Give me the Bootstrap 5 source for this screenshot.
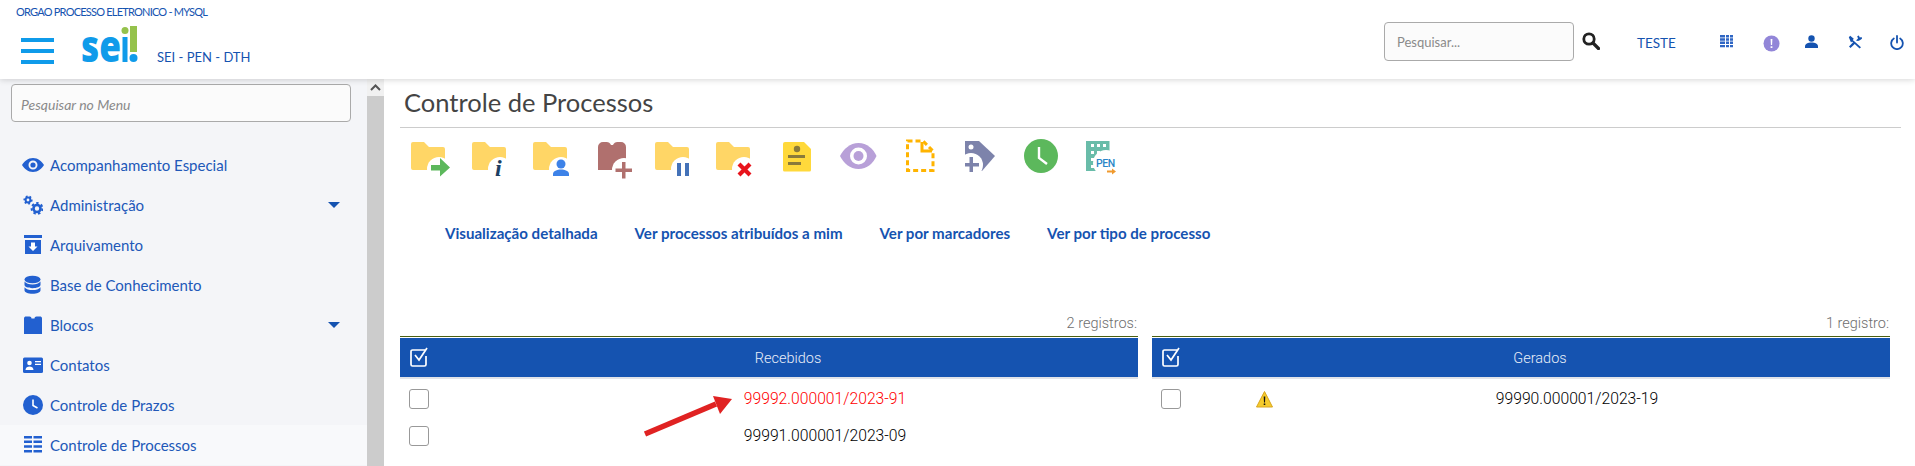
<!DOCTYPE html>
<html lang="pt-BR">
<head>
    <meta charset="UTF-8">
    <title>SEI - Controle de Processos</title>
    <link href="https://cdn.jsdelivr.net/npm/bootstrap@5.3.0/dist/css/bootstrap.min.css" rel="stylesheet">
    <style>
        html, body { height: 466px; overflow: hidden; }
        body { font-family: "Lato", "Liberation Sans", sans-serif; background: #fff; color: #333; }

        .sei-top { height: 79px; position: relative; z-index: 5; box-shadow: 0 1px 6px rgba(0,0,0,.16); background: #fff; }
        .sei-brand { padding: 5px 0 0 16px; width: 600px; }
        .sei-orgao { font-size: 11px; line-height: 13px; color: #1553b0; letter-spacing: -.78px; }
        .sei-hamb { width: 33px; margin: 20px 27px 0 5px; }
        .sei-hamb span { display: block; height: 4px; background: #0f9bea; margin-bottom: 7px; }
        .sei-logo { display: block; margin-top: 8px; overflow: visible; }
        .sei-orgname { font-size: 13px; color: #1553b0; margin-top: 30px; line-height: 18px; }
        .sei-tools { padding: 22px 3px 0 0; }
        .sei-search { width: 190px; height: 39px; font-size: 13px; background: #fbfbfb; border: 1px solid #aaa; border-radius: 4px; padding: 0 12px; }
        .sei-search::placeholder, .side-search::placeholder { color: #8a8a8a; }
        .sei-mag { margin: 10px 37px 0 8px; }
        .sei-user { font-size: 13.5px; color: #1553b0; width: 83px; margin-top: 12px; line-height: 18px; }
        .sei-topicon { width: 42.5px; margin-top: 13px; }
        .sei-topicon svg { display: block; }
        .sei-topend { width: 22px; }

        .sei-body { height: 387px; }
        .sei-side { width: 367px; background: #f4f5f8; padding: 5px 16px 0 0; }
        .side-search { width: 340px; height: 38px; margin-left: 11px; font-size: 14px; font-style: italic; background: #fbfbfb; border: 1px solid #aaa; border-radius: 4px; padding: 2px 9px 0; }
        .side-menu { margin-top: 23px; width: 367px; }
        .side-item { height: 40px; padding-left: 23px; color: #2158b8; font-size: 15px; text-decoration: none; }
        .side-item.is-current { background: #f8f9fb; }
        .side-item svg { width: 20px; height: 20px; margin-right: 7px; flex: none; }
        .side-item svg.side-wide { width: 22px; margin-left: -1px; margin-right: 6px; }
        .side-caret { border: 6px solid transparent; border-top: 6px solid #1553b0; border-bottom: 0; margin: 0 27px 0 auto; }
        .sei-scroll { width: 17px; background: #ccc; }
        .sei-scrollbtn { height: 17px; background: #f1f1f1; }

        .sei-main { padding: 0 14px 0 16px; min-width: 0; }
        .sei-title { height: 49px; border-bottom: 1px solid #ccc; font-size: 25.5px; line-height: 47px; color: #444; padding-left: 4px; margin: 0; font-weight: 400; }
        .sei-bar { margin-top: 11px; height: 40px; }
        .sei-bar div { width: 61px; text-align: center; }
        .sei-bar svg { display: inline-block; vertical-align: top; }
        .sei-links { margin-top: 43px; padding-left: 45px; height: 22px; gap: 37px; }
        .sei-links a { font-size: 15.1px; line-height: 22px; font-weight: 700; color: #1553b0; text-decoration: none; }
        .sei-tables { margin-top: 70px; gap: 14px; position: relative; }
        .sei-grid { width: 738px; font-family: "Roboto", sans-serif; }
        .sei-count { text-align: right; font-size: 14.5px; line-height: 20px; color: #6e6e6e; height: 23px; font-weight: 300; border-bottom: 1px solid #4a5f10; margin-bottom: 1px; padding-right: 1px; }
        .sei-table { table-layout: fixed; width: 100%; margin: 0; }
        .sei-table th { background: #1553b0; color: #e8eef8; font-weight: 300; font-size: 14.5px; text-align: center; height: 40px; padding: 2px 0 0; border-bottom: 2px solid #e1e3e8; }
        .sei-table th svg { display: block; margin: -3px 0 0 1px; }
        .sei-table td { height: 37px; padding: 0; font-size: 15.7px; font-weight: 300; text-align: center; color: #000; }
        .sei-table tbody tr:first-child td { height: 40px; }
        .sei-table tbody tr + tr td { height: 36px; }
        .sei-table th:first-child, .sei-table td:first-child { text-align: left; padding-left: 9px; }
        .sei-table td.is-new { color: #f00; }
        .sei-tick { width: 20px; height: 20px; display: block; border: 1px solid #999; border-radius: 3px; background: #fff; }
        .sei-arrow { position: absolute; left: 236px; top: 74px; }
    </style>
</head>
<body>
    <svg width="0" height="0" class="position-absolute">
        <symbol id="pasta" viewBox="0 0 40 40">
            <path fill="#ffd666" d="M2 3h11l5 5h14a2 2 0 0 1 2 2v19a2 2 0 0 1-2 2H2a2 2 0 0 1-2-2V5a2 2 0 0 1 2-2z"/>
            <circle cx="28" cy="30" r="12" fill="#fff"/>
        </symbol>
    </svg>

    <header class="sei-top d-flex justify-content-between">
        <div class="sei-brand">
            <div class="sei-orgao">ORGAO PROCESSO ELETRONICO - MYSQL</div>
            <div class="d-flex">
                <div class="sei-hamb"><span></span><span></span><span></span></div>
                <svg class="sei-logo" width="76" height="38" viewBox="0 0 76 38">
                    <text x="0" y="35.500" font-family="Open Sans, sans-serif" font-weight="800" font-size="45" fill="#0f9bea" textLength="40" lengthAdjust="spacingAndGlyphs">se</text>
                    <rect x="41.500" y="11" width="5" height="25" fill="#0f9bea"/>
                    <circle cx="44" cy="4.500" r="3.500" fill="#95c24c"/>
                    <rect x="49" y="0" width="7" height="26" fill="#95c24c"/>
                    <circle cx="52.500" cy="32" r="4" fill="#0f9bea"/>
                </svg>
                <div class="sei-orgname">SEI - PEN - DTH</div>
            </div>
        </div>
        <div class="sei-tools d-flex">
            <input class="sei-search" type="text" placeholder="Pesquisar...">
            <svg class="sei-mag" width="18" height="18" viewBox="0 0 18 18"><circle cx="7" cy="7" r="5.200" fill="none" stroke="#222" stroke-width="2.800"/><path d="M11 11l5.500 5.500" stroke="#222" stroke-width="3.200" stroke-linecap="round"/></svg>
            <div class="sei-user">TESTE</div>
            <div class="sei-topicon"><svg width="13" height="13" viewBox="0 0 13 13" fill="#2f66c4"><path d="M0 0h5v2.400H0zM6 0h3v2.400H6zM10 0h3v2.400h-3zM0 3.300h5v2.400H0zM6 3.300h3v2.400H6zM10 3.300h3v2.400h-3zM0 6.600h5V9H0zM6 6.600h3V9H6zM10 6.600h3V9h-3zM0 9.900h5v2.400H0zM6 9.900h3v2.400H6zM10 9.900h3v2.400h-3z"/></svg></div>
            <div class="sei-topicon"><svg width="17" height="17" viewBox="0 0 17 17"><circle cx="8.500" cy="8.500" r="8" fill="#9286d8"/><path d="M7.600 4h1.800l-.3 6H7.900zM7.600 11.200h1.800V13H7.600z" fill="#fff"/></svg></div>
            <div class="sei-topicon"><svg width="13" height="13" viewBox="0 0 13 13" fill="#1553b0"><circle cx="6.500" cy="3.500" r="3.200"/><path d="M0 13v-1.500C0 8.800 3 7.600 6.500 7.600s6.500 1.200 6.500 3.900V13z"/></svg></div>
            <div class="sei-topicon"><svg width="14" height="14" viewBox="0 0 14 14" fill="#1553b0"><path d="M.8 2.200L2.200.8l3.600 3 -1 1.200 8.200 7.200-1.400 1.400L4 6.400 3 7.400z"/><path d="M5.800 6.600L1 11.500 2.500 13l5-4.800zM8 5.400l2-2 -.8-2.200 1.600-.8 1 2.200 1.800-.6.400 1.800-2.200 1.400-1.800.8z"/></svg></div>
            <div class="sei-topicon sei-topend"><svg width="14" height="15" viewBox="0 0 14 15" fill="none" stroke="#1553b0" stroke-width="1.800"><path d="M7 1v6.500" stroke-linecap="round"/><path d="M3.800 3.500a5.800 5.800 0 1 0 6.400 0" stroke-linecap="round"/></svg></div>
        </div>
    </header>

    <div class="sei-body d-flex">
        <aside class="sei-side">
            <input class="side-search" type="text" placeholder="Pesquisar no Menu">
            <nav class="side-menu d-flex flex-column">
                <a href="#" class="side-item d-flex align-items-center">
                    <svg class="side-wide" viewBox="0 0 22 20" fill="#2260d0"><path d="M11 3C6 3 2 6.500 0 10c2 3.500 6 7 11 7s9-3.500 11-7c-2-3.500-6-7-11-7zm0 11.500a4.500 4.500 0 1 1 0-9 4.500 4.500 0 0 1 0 9z"/><circle cx="11" cy="10" r="2.600"/></svg>Acompanhamento Especial
                </a>
                <a href="#" class="side-item d-flex align-items-center">
                    <svg viewBox="0 0 20 20" fill="none" stroke="#2260d0"><circle cx="5" cy="5" r="2.400" stroke-width="2"/><circle cx="5" cy="5" r="3.800" stroke-width="1.600" stroke-dasharray="1.800 2"/><circle cx="14" cy="13.500" r="3.500" stroke-width="2.600"/><circle cx="14" cy="13.500" r="5.400" stroke-width="2" stroke-dasharray="2.400 2.400"/></svg>Administração<span class="side-caret"></span>
                </a>
                <a href="#" class="side-item d-flex align-items-center">
                    <svg viewBox="0 0 20 20" fill="#2260d0"><path d="M1 0h18v3H1zM2 5h16v14H2z"/><path d="M8 7.500h4v4h2.500L10 16l-4.500-4.500H8z" fill="#fff"/></svg>Arquivamento
                </a>
                <a href="#" class="side-item d-flex align-items-center">
                    <svg viewBox="0 0 20 20" fill="#2260d0"><ellipse cx="9.500" cy="4.500" rx="8" ry="3.800"/><path d="M1.500 6.600c1.500 2 4.500 2.800 8 2.800s6.500-.8 8-2.800v3.200c0 2-3.500 3.400-8 3.400s-8-1.400-8-3.400z"/><path d="M1.500 12.200c1.500 2 4.500 2.800 8 2.800s6.500-.8 8-2.800v3c0 2-3.500 3.500-8 3.500s-8-1.500-8-3.500z"/></svg>Base de Conhecimento
                </a>
                <a href="#" class="side-item d-flex align-items-center">
                    <svg viewBox="0 0 20 20" fill="#2260d0"><path d="M1 3.500C1 2 2 1.500 3 1.500h3.500c1.200 0 2 .7 2 2h3c0-1.300.8-2 2-2H17c1 0 2 .5 2 2V19H1z"/></svg>Blocos<span class="side-caret"></span>
                </a>
                <a href="#" class="side-item d-flex align-items-center">
                    <svg viewBox="0 0 20 20"><rect y="2.500" width="20" height="15.500" rx="1.500" fill="#2260d0"/><circle cx="6.500" cy="8" r="2.300" fill="#fff"/><path d="M2.500 15c0-2.500 2-3.500 4-3.500s4 1 4 3.500zM12 6h6v1.300h-6zM12 8.800h6v1.300h-6z" fill="#fff"/></svg>Contatos
                </a>
                <a href="#" class="side-item d-flex align-items-center">
                    <svg viewBox="0 0 20 20"><circle cx="10" cy="10" r="10" fill="#2260d0"/><path d="M10 4.500V10.500l4.500 2.500" fill="none" stroke="#fff" stroke-width="1.600"/></svg>Controle de Prazos
                </a>
                <a href="#" class="side-item is-current d-flex align-items-center">
                    <svg viewBox="0 0 20 20" fill="#2260d0"><path d="M1 1h8v2.500H1zM10.500 1H19v2.500h-8.500zM1 5.600h8v2.500H1zM10.500 5.600H19v2.500h-8.500zM1 10.200h8v2.500H1zM10.500 10.200H19v2.500h-8.500zM1 15h8v2.500H1zM10.500 15H19v2.500h-8.500z"/></svg>Controle de Processos
                </a>
            </nav>
        </aside>
        <div class="sei-scroll">
            <div class="sei-scrollbtn d-flex justify-content-center align-items-center">
                <svg width="11" height="7" viewBox="0 0 11 7"><path d="M1 6l4.500-4.500L10 6" fill="none" stroke="#555" stroke-width="2"/></svg>
            </div>
        </div>

        <main class="sei-main flex-grow-1">
            <h1 class="sei-title">Controle de Processos</h1>

            <div class="sei-bar d-flex">
                <div><svg width="40" height="40"><use href="#pasta"/><path fill="#5cb85c" d="M20 26h9v-7l10 9.500-10 9v-6h-9z"/></svg></div>
                <div><svg width="40" height="40"><use href="#pasta"/><text x="23" y="37" font-family="Liberation Serif, serif" font-style="italic" font-weight="700" font-size="24" fill="#1c3f63">i</text></svg></div>
                <div><svg width="40" height="40"><use href="#pasta"/><circle cx="28" cy="25" r="4.500" fill="#3d82e8"/><path fill="#3d82e8" d="M20 37v-2c0-3 4-4.500 8-4.500s8 1.500 8 4.500v2z"/></svg></div>
                <div><svg width="40" height="40"><path fill="#b0706e" d="M4 8a5 5 0 0 1 5-5h3a5 5 0 0 1 5 3h2a5 5 0 0 1 5-3h3a5 5 0 0 1 5 5v23H4z"/><circle cx="30" cy="31" r="12" fill="#fff"/><path fill="#b0706e" d="M28 23h3.500v6.500H38V33h-6.500v6.500H28V33h-6.500v-3.500H28z"/></svg></div>
                <div><svg width="40" height="40"><use href="#pasta"/><path fill="#4472b8" d="M22 24h4v13h-4zM30 24h4v13h-4z"/></svg></div>
                <div><svg width="40" height="40"><use href="#pasta"/><path d="M23 25l11 11M34 25L23 36" stroke="#e8141c" stroke-width="4.200" fill="none"/></svg></div>
                <div><svg width="40" height="40"><path fill="#ffd93b" d="M8 3h18l7 7v21a1.500 1.500 0 0 1-1.500 1.500h-25A1.500 1.500 0 0 1 5 31V5a2 2 0 0 1 2-2z" transform="translate(1 0)"/><circle cx="20" cy="10" r="3.200" fill="#8a7a3a"/><path fill="#8a7a3a" d="M11 16h17v3H11zM11 23h13v3H11z"/></svg></div>
                <div><svg width="40" height="40"><path fill="#b8a0d8" d="M20.500 4C12 4 5.500 10 2 17 5.500 24 12 30 20.500 30S35.500 24 38.500 17C35.500 10 29 4 20.500 4z"/><circle cx="20.500" cy="17" r="8.500" fill="#fff"/><circle cx="20.500" cy="17" r="5" fill="#b8a0d8"/></svg></div>
                <div><svg width="40" height="40"><path fill="none" stroke="#ffb400" stroke-width="3" stroke-dasharray="5 3" d="M8.500 2H24l10 10v19.500H8.500z"/><path fill="none" stroke="#ffb400" stroke-width="3" d="M23 3v9h10"/></svg></div>
                <div><svg width="40" height="40"><path fill="#7d83ab" d="M5 2h14l16 15-13 15H5z"/><circle cx="11" cy="8" r="2.500" fill="#fff"/><circle cx="11" cy="26" r="12" fill="#fff"/><path fill="#7d83ab" d="M9.500 18h3.500v6h6v3.500h-6V33H9.500v-5.500H5V24h4.500z"/></svg></div>
                <div><svg width="40" height="40"><circle cx="20" cy="17" r="17" fill="#5cb85c"/><path d="M18 8v11l8 6" fill="none" stroke="#fff" stroke-width="2.400"/></svg></div>
                <div><svg width="40" height="40"><path fill="#69bca9" d="M4 2h23.500v30H4z"/><path fill="#fff" d="M9 5h3v3H9zM15 5h3v3h-3zM21 5h3v3h-3zM9 12h3v3H9zM15 12h3v3h-3zM9 19h3v3H9zM9 26h3v3H9z"/><circle cx="24" cy="24" r="13" fill="#fff"/><text x="14" y="28" font-family="Roboto, sans-serif" font-weight="500" font-size="10.500" fill="#2a86c8" letter-spacing="-.4">PEN</text><path d="M25 31.500h5v-2l4 3-4 3v-2h-5z" fill="#f09a2e"/></svg></div>
            </div>

            <div class="sei-links d-flex">
                <a href="#">Visualização detalhada</a>
                <a href="#">Ver processos atribuídos a mim</a>
                <a href="#">Ver por marcadores</a>
                <a href="#">Ver por tipo de processo</a>
            </div>

            <div class="sei-tables d-flex">
                <div class="sei-grid">
                    <div class="sei-count">2 registros:</div>
                    <table class="sei-table">
                        <colgroup><col style="width:38px"><col style="width:148px"><col style="width:478px"><col></colgroup>
                        <thead><tr>
                            <th><svg width="19" height="20" viewBox="0 0 19 20" fill="none" stroke="#fff"><path d="M15 3H2.500a1.500 1.500 0 0 0-1.500 1.500v13A1.500 1.500 0 0 0 2.500 19h12a1.500 1.500 0 0 0 1.500-1.500V9" stroke-width="1.700"/><path d="M5 8l4 5 8-12" stroke-width="1.700"/></svg></th>
                            <th colspan="3">Recebidos</th>
                        </tr></thead>
                        <tbody>
                            <tr><td><span class="sei-tick"></span></td><td></td><td class="is-new">99992.000001/2023-91</td><td></td></tr>
                            <tr><td><span class="sei-tick"></span></td><td></td><td>99991.000001/2023-09</td><td></td></tr>
                        </tbody>
                    </table>
                </div>
                <div class="sei-grid">
                    <div class="sei-count">1 registro:</div>
                    <table class="sei-table">
                        <colgroup><col style="width:38px"><col style="width:148px"><col style="width:478px"><col></colgroup>
                        <thead><tr>
                            <th><svg width="19" height="20" viewBox="0 0 19 20" fill="none" stroke="#fff"><path d="M15 3H2.500a1.500 1.500 0 0 0-1.500 1.500v13A1.500 1.500 0 0 0 2.500 19h12a1.500 1.500 0 0 0 1.500-1.500V9" stroke-width="1.700"/><path d="M5 8l4 5 8-12" stroke-width="1.700"/></svg></th>
                            <th colspan="3">Gerados</th>
                        </tr></thead>
                        <tbody>
                            <tr>
                                <td><span class="sei-tick"></span></td>
                                <td><svg width="17" height="17" viewBox="0 0 17 17"><path d="M8.500 .5L16.500 16H.5z" fill="#f5cb2c" stroke="#d8a520" stroke-linejoin="round"/><path d="M7.700 5.500h1.600l-.3 6H8zM7.700 12.500h1.600V14H7.700z" fill="#111"/></svg></td>
                                <td>99990.000001/2023-19</td>
                                <td></td>
                            </tr>
                        </tbody>
                    </table>
                </div>
                <svg class="sei-arrow" width="100" height="50" viewBox="0 0 100 50"><path d="M9 46L80 16" stroke="#e02222" stroke-width="5.500" fill="none"/><path d="M77 8l19 3-12 15z" fill="#e02222"/></svg>
            </div>
        </main>
    </div>

    <script src="https://cdn.jsdelivr.net/npm/bootstrap@5.3.0/dist/js/bootstrap.bundle.min.js"></script>
</body>
</html>
